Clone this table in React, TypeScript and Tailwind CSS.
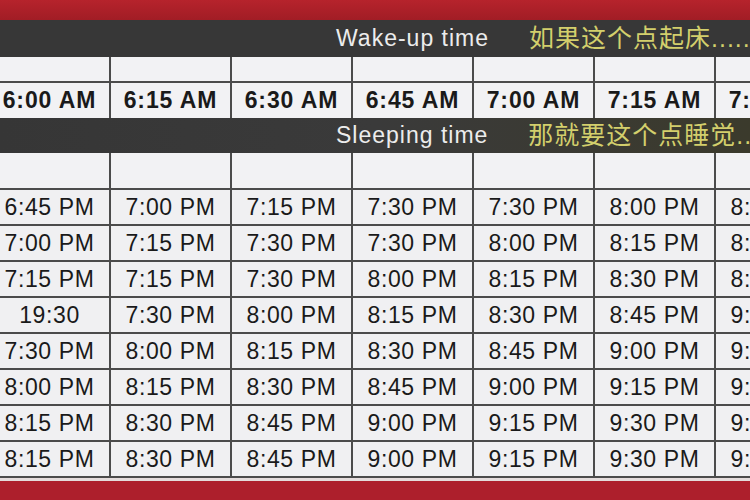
const wake = ["6:00 AM", "6:15 AM", "6:30 AM", "6:45 AM", "7:00 AM", "7:15 AM", "7:30 AM"];

const sleep = [
  ["6:45 PM", "7:00 PM", "7:15 PM", "7:30 PM", "7:30 PM", "8:00 PM", "8:15 PM"],
  ["7:00 PM", "7:15 PM", "7:30 PM", "7:30 PM", "8:00 PM", "8:15 PM", "8:30 PM"],
  ["7:15 PM", "7:15 PM", "7:30 PM", "8:00 PM", "8:15 PM", "8:30 PM", "8:45 PM"],
  ["19:30", "7:30 PM", "8:00 PM", "8:15 PM", "8:30 PM", "8:45 PM", "9:00 PM"],
  ["7:30 PM", "8:00 PM", "8:15 PM", "8:30 PM", "8:45 PM", "9:00 PM", "9:15 PM"],
  ["8:00 PM", "8:15 PM", "8:30 PM", "8:45 PM", "9:00 PM", "9:15 PM", "9:30 PM"],
  ["8:15 PM", "8:30 PM", "8:45 PM", "9:00 PM", "9:15 PM", "9:30 PM", "9:45 PM"],
  ["8:15 PM", "8:30 PM", "8:45 PM", "9:00 PM", "9:15 PM", "9:30 PM", "9:45 PM"],
];

function Band({ en, zh }: { en: string; zh: string }) {
  return (
    <div className="flex items-center h-full pl-[336px] gap-[40px] whitespace-nowrap">
      <span className="text-[23px] tracking-[1px] text-[#ececec]">{en}</span>
      <span className="text-[25px] tracking-[1px] text-[#d3cf6c] font-['Liberation_Sans','Noto_Sans_CJK_SC',sans-serif]">
        {zh}
      </span>
    </div>
  );
}

export default function App() {
  return (
    <div className="w-[750px] h-[500px] overflow-hidden bg-[#ad1f2c] font-['Liberation_Sans',Arial,sans-serif] text-[#1a1a1a]">
      <div className="h-[20px] bg-gradient-to-b from-[#b6232c] to-[#a11d25]" />
      <div className="h-[37px] bg-[#373737]">
        <Band en="Wake-up time" zh="如果这个点起床....." />
      </div>

      <div className="ml-[-10px] w-[847px] grid grid-cols-[repeat(7,119px)] gap-[2px] bg-[#4b4b4b]">
        {wake.map((w, i) => (
          <div key={"b" + i} className="h-[24px] bg-[#f2f2f4]" />
        ))}
        {wake.map((w) => (
          <div
            key={w}
            className="h-[35px] bg-[#f2f2f4] flex items-center justify-center text-[23px] font-bold tracking-[0.9px]"
          >
            {w}
          </div>
        ))}
      </div>

      <div className="h-[35px] bg-gradient-to-r from-[#363636] via-[#3a3a3a] to-[#3b3a2c]">
        <Band en="Sleeping time" zh="那就要这个点睡觉......" />
      </div>

      <div className="ml-[-10px] w-[847px] grid grid-cols-[repeat(7,119px)] gap-[2px] bg-[#4b4b4b] border-b-2 border-[#4b4b4b]">
        {wake.map((w, i) => (
          <div key={"s" + i} className="h-[35px] bg-[#f2f2f4]" />
        ))}
        {sleep.map((row, r) =>
          row.map((t, c) => (
            <div
              key={r + "-" + c}
              className="h-[34px] bg-[#f0f0f2] flex items-center justify-center text-[23px] tracking-[0.6px]"
            >
              {t}
            </div>
          ))
        )}
      </div>
      <div className="h-[3px] bg-[#e4dcdc]" />
    </div>
  );
}
